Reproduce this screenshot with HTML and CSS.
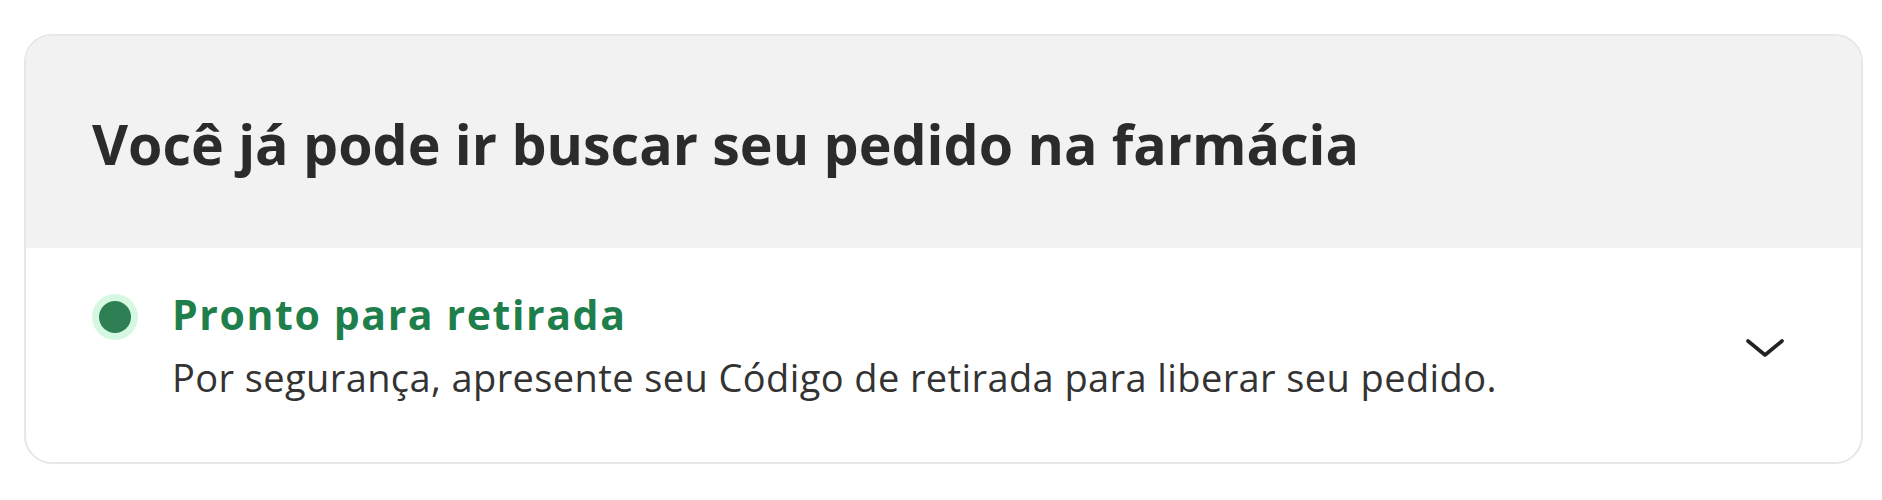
FILE: index.html
```html
<!DOCTYPE html>
<html lang="pt-BR">
<head>
<meta charset="utf-8">
<link rel="stylesheet" href="styles.css">
</head>
<body>
<section class="card">
  <header class="card-header">
    <h2 class="title">Você já pode ir buscar seu pedido na farmácia</h2>
  </header>
  <div class="card-body">
    <span class="status-dot"></span>
    <div class="status-text">
      <p class="status-title">Pronto para retirada</p>
      <p class="status-desc">Por segurança, apresente seu Código de retirada para liberar seu pedido.</p>
    </div>
    <svg class="chevron" width="38" height="20" viewBox="0 0 38 20" aria-hidden="true">
      <path d="M2 3 L19 17 L36 3" fill="none" stroke="#222" stroke-width="3.6" stroke-linecap="round" stroke-linejoin="round"/>
    </svg>
  </div>
</section>
</body>
</html>
```
FILE: styles.css
```css
html, body {
  margin: 0;
  padding: 0;
  background: #ffffff;
}
body {
  font-family: "Open Sans", "Noto Sans", sans-serif;
  padding: 34px 19px 0 24px;
}
.card {
  border: 2px solid #e7e7e7;
  border-radius: 28px;
  overflow: hidden;
  background: #ffffff;
}
.card-header {
  background: #f2f2f2;
  height: 212px;
  display: flex;
  align-items: center;
  padding: 0 66px;
}
.title {
  margin: 0;
  font-size: 55.5px;
  font-weight: 700;
  color: #2b2b2b;
  line-height: 1.2;
  padding-top: 4px;
}
.card-body {
  display: flex;
  align-items: flex-start;
  height: 214px;
  box-sizing: border-box;
  padding: 41px 77px 0 73px;
}
.status-dot {
  flex: none;
  width: 32px;
  height: 32px;
  border-radius: 50%;
  background: #2f7f55;
  box-shadow: 0 0 0 7px #d6f8e2;
  margin-top: 12px;
}
.status-text {
  flex: 1;
  margin-left: 41px;
}
.status-title {
  margin: 0;
  font-size: 41px;
  font-weight: 700;
  color: #1f7f4c;
  line-height: 50px;
  letter-spacing: 1.6px;
}
.status-desc {
  margin: 13px 0 0;
  font-size: 38px;
  font-weight: 400;
  color: #333333;
  line-height: 50px;
  letter-spacing: 0.4px;
}
.chevron {
  flex: none;
  margin-top: 49px;
}
```
